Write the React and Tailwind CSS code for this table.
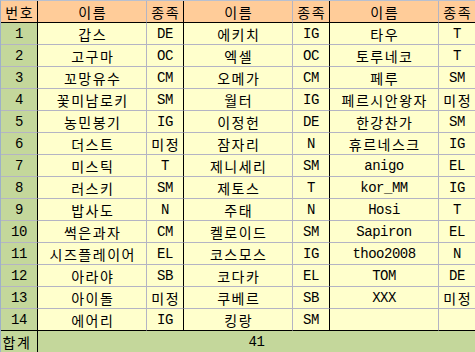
import React from 'react';

const rows = [
  ['1', '갑스', 'DE', '에키치', 'IG', '타우', 'T'],
  ['2', '고구마', 'OC', '엑셀', 'OC', '토루네코', 'T'],
  ['3', '꼬망유수', 'CM', '오메가', 'CM', '페루', 'SM'],
  ['4', '꽃미남로키', 'SM', '월터', 'IG', '페르시안왕자', '미정'],
  ['5', '농민봉기', 'IG', '이정헌', 'DE', '한강찬가', 'SM'],
  ['6', '더스트', '미정', '잠자리', 'N', '휴르네스크', 'IG'],
  ['7', '미스틱', 'T', '제니세리', 'SM', 'anigo', 'EL'],
  ['8', '러스키', 'SM', '제토스', 'T', 'kor_MM', 'IG'],
  ['9', '밥사도', 'N', '주태', 'N', 'Hosi', 'T'],
  ['10', '썩은과자', 'CM', '켈로이드', 'SM', 'Sapiron', 'EL'],
  ['11', '시즈플레이어', 'EL', '코스모스', 'IG', 'thoo2008', 'N'],
  ['12', '아라야', 'SB', '코다카', 'EL', 'TOM', 'DE'],
  ['13', '아이돌', '미정', '쿠베르', 'SB', 'XXX', '미정'],
  ['14', '에어리', 'IG', '킹랑', 'SM', '', ''],
];

const header = ['번호', '이름', '종족', '이름', '종족', '이름', '종족'];

// right edge of each column: black between groups, grey inside
const rightBorder = [
  'border-r border-r-black',
  'border-r border-r-[#b4b4c4]',
  'border-r border-r-black',
  'border-r border-r-[#b4b4c4]',
  'border-r border-r-black',
  'border-r border-r-[#b4b4c4]',
  '',
];

const ko = "font-['Noto_Sans_CJK_KR',sans-serif] text-[14px] tracking-[1.5px] pl-[1.5px]";
const en = "font-['Liberation_Mono',monospace] text-[14px] tracking-[-0.5px]";

const txt = s => (/[가-힣]/.test(s) ? ko : en);

const Cell = ({ value, col, bg, bottom }) => (
  <div
    className={`h-[22px] flex items-center justify-center pt-[2px] whitespace-nowrap overflow-hidden text-black ${bg} ${bottom} ${rightBorder[col]} ${txt(value)}`}
  >
    {value}
  </div>
);

const App = () => {
  return (
    <div className="w-[475px] h-[352px] overflow-hidden bg-[#ffffcc] border-l border-t border-l-[#9eb0c8] border-t-[#b8c0d0]">
      <div className="grid grid-cols-[37px_109px_37px_109px_37px_109px_36px]">
        {header.map((h, i) => (
          <Cell key={'h' + i} value={h} col={i} bg="bg-[#ffcc99]" bottom="border-b border-b-black" />
        ))}
        {rows.map((r, ri) =>
          r.map((v, ci) => (
            <Cell
              key={ri + '-' + ci}
              value={v}
              col={ci}
              bg={ci === 0 ? 'bg-[#c4d79b]' : 'bg-[#ffffcc]'}
              bottom={ri === rows.length - 1 ? 'border-b border-b-black' : 'border-b border-b-[#b4b4c4]'}
            />
          ))
        )}
        <div className={`h-[21px] flex items-center pt-[2px] bg-[#c4d79b] border-r border-r-black ${ko}`}>
          합계
        </div>
        <div className={`col-span-6 h-[21px] flex items-center justify-center pt-[2px] bg-[#c4d79b] ${en}`}>
          41
        </div>
      </div>
    </div>
  );
};

export default App;
